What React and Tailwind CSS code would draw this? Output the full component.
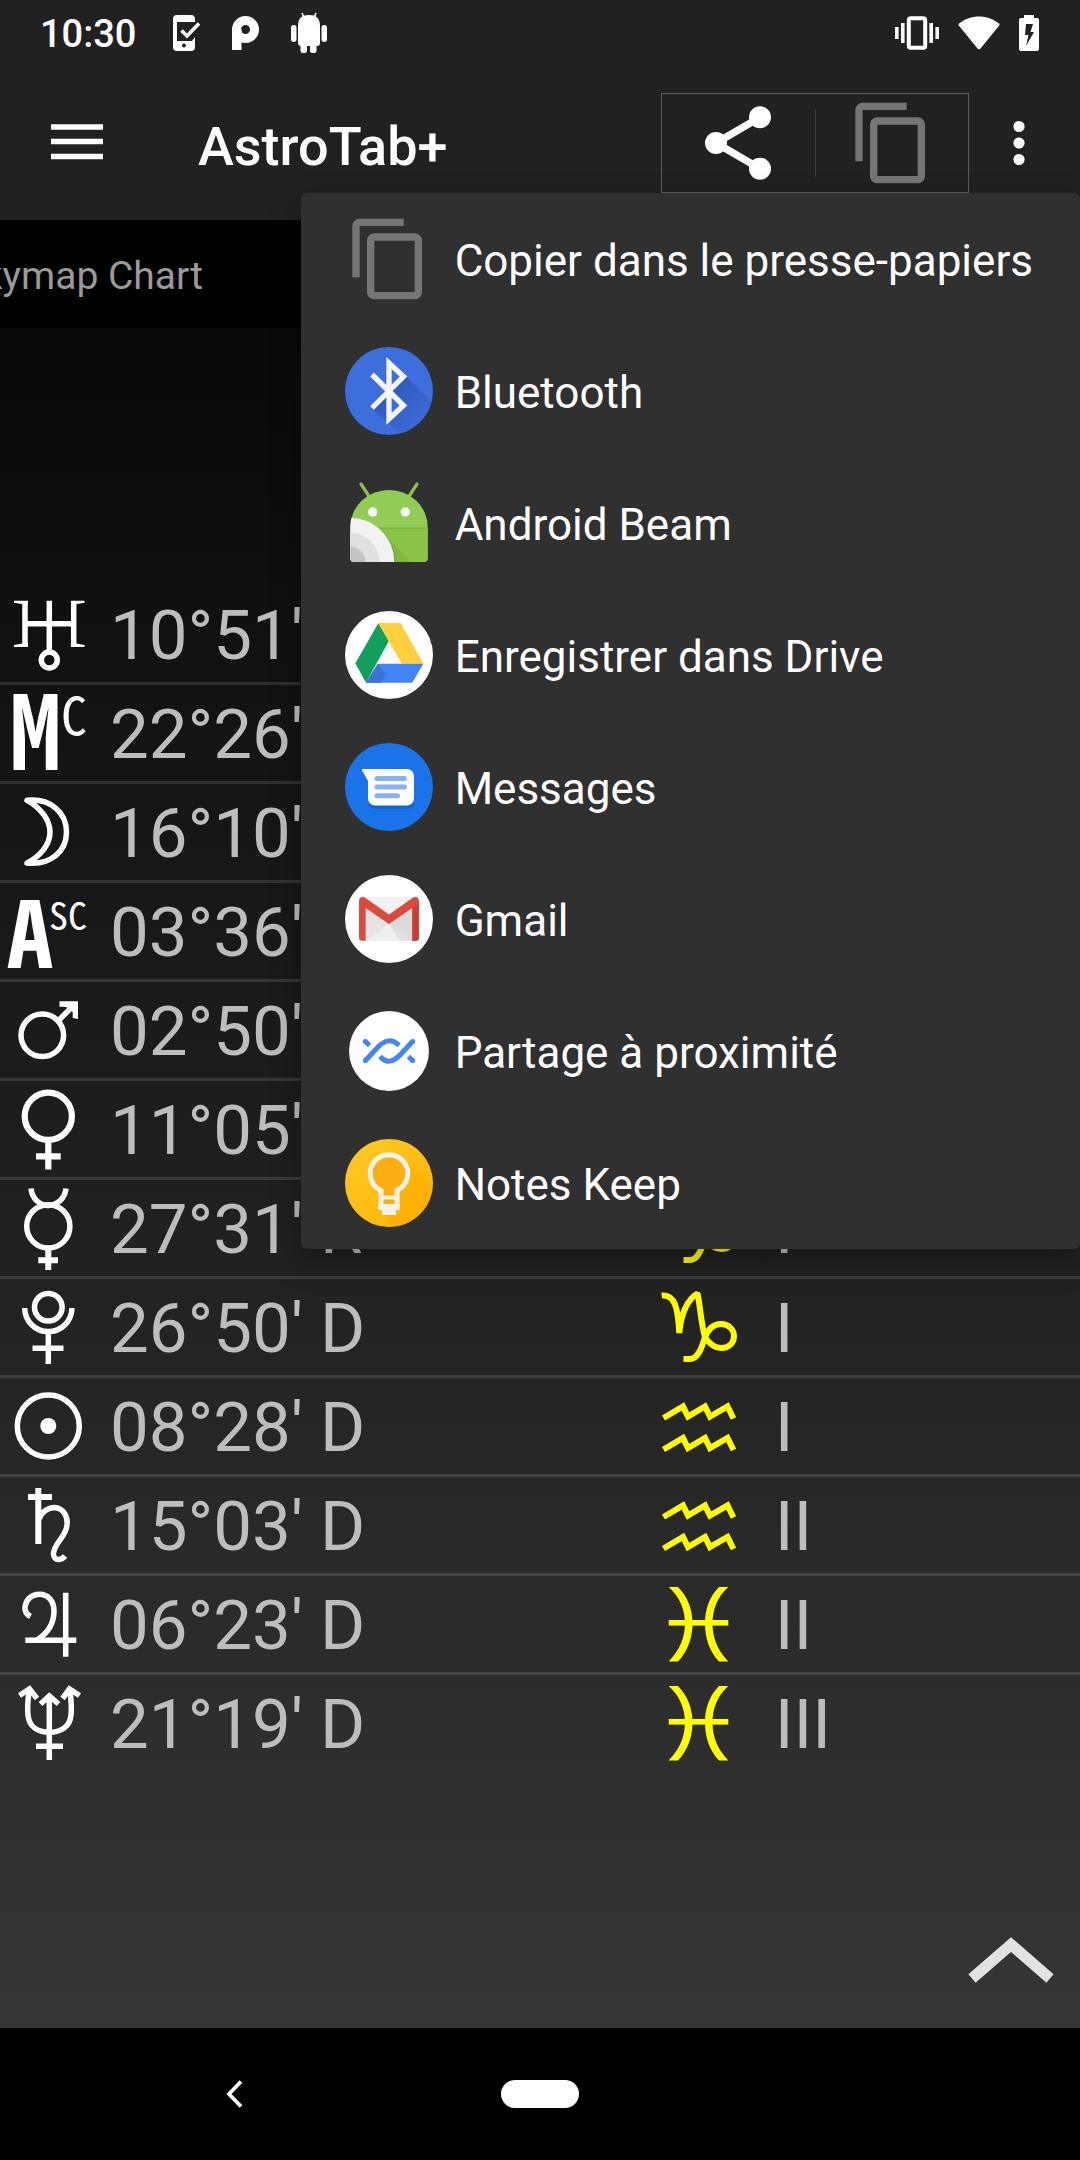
import React from "react";

/* ---------- status bar icons ---------- */

const PhoneCheckIcon = () => (
  <svg width="28" height="36" viewBox="0 0 28 36" aria-hidden="true">
    <path
      fill="#fff"
      fillRule="evenodd"
      d="M4 0H18a4 4 0 0 1 4 4V7H4V26H19L22 22V32a4 4 0 0 1-4 4H4a4 4 0 0 1-4-4V4A4 4 0 0 1 4 0ZM11 28.500a2 2 0 1 0 .01 0Z"
    />
    <path d="M8.500 15.500 14 21 26 8.500" fill="none" stroke="#fff" strokeWidth="3.500" />
  </svg>
);

const PeeIcon = () => (
  <svg width="28" height="36" viewBox="0 0 28 36" aria-hidden="true">
    <circle cx="13.500" cy="14.500" r="9" fill="none" stroke="#fff" strokeWidth="9" />
    <rect x="0" y="14" width="9.500" height="21" fill="#fff" />
  </svg>
);

const AndroidIcon = () => (
  <svg width="36" height="42" viewBox="0 0 36 42" aria-hidden="true" fill="#fff">
    <path d="M11 1 13 6M25 1 23 6" stroke="#fff" strokeWidth="1.600" />
    <path d="M7 14C7 6 11 3 18 3s11 3 11 11Z" />
    <rect x="7" y="12" width="22" height="22" rx="3" />
    <rect x="0" y="13" width="5.500" height="17" rx="2.700" />
    <rect x="30.500" y="13" width="5.500" height="17" rx="2.700" />
    <rect x="9.500" y="28" width="6.500" height="13" rx="2.500" />
    <rect x="19" y="28" width="6.500" height="13" rx="2.500" />
  </svg>
);

const VibrateIcon = () => (
  <svg width="44" height="34" viewBox="0 0 44 34" aria-hidden="true" fill="#fff">
    <rect x="0" y="11" width="3.600" height="12" />
    <rect x="6" y="7" width="3.600" height="20" />
    <rect x="34.400" y="7" width="3.600" height="20" />
    <rect x="40.400" y="11" width="3.600" height="12" />
    <rect x="13.800" y="2.300" width="16.400" height="29.400" rx="2" fill="none" stroke="#fff" strokeWidth="4" />
  </svg>
);

const WifiIcon = () => (
  <svg width="42" height="34" viewBox="0 0 42 34" aria-hidden="true">
    <path fill="#fff" d="M1 7.500C7 3 14 .5 21 .5S35 3 41 7.500q1 1 .2 2L22.500 32.500q-1.500 1.500-3 0L.8 9.500q-.8-1 .2-2Z" />
  </svg>
);

const BatteryIcon = () => (
  <svg width="20" height="36" viewBox="0 0 20 36" aria-hidden="true">
    <path
      fill="#fff"
      fillRule="evenodd"
      d="M5 0H15V3H18a2 2 0 0 1 2 2V34a2 2 0 0 1-2 2H2a2 2 0 0 1-2-2V5A2 2 0 0 1 2 3H5ZM7 9 6 20H9.500L7 31 15 17H11.500L14 9Z"
    />
  </svg>
);

/* ---------- action icons ---------- */

const CopyIcon = () => (
  <svg width="88" height="88" viewBox="0 0 24 24" aria-hidden="true" fill="#757575">
    <path d="M16 1H4c-1.100 0-2 .9-2 2v14h2V3h12V1zm3 4H8c-1.100 0-2 .9-2 2v14c0 1.100.9 2 2 2h11c1.100 0 2-.9 2-2V7c0-1.100-.9-2-2-2zm0 16H8V7h11v14z" />
  </svg>
);

const ShareIcon = () => (
  <svg width="88" height="88" viewBox="0 0 24 24" aria-hidden="true" fill="#fff">
    <path d="M6 12 18 5M6 12 18 19" stroke="#fff" strokeWidth="2" />
    <circle cx="18" cy="5" r="3" />
    <circle cx="6" cy="12" r="3" />
    <circle cx="18" cy="19" r="3" />
  </svg>
);

/* ---------- share target icons ---------- */

const BluetoothIcon = () => (
  <svg width="88" height="88" viewBox="0 0 88 88" aria-hidden="true">
    <defs>
      <clipPath id="bt-clip">
        <circle cx="44" cy="44" r="44" />
      </clipPath>
      <linearGradient id="bt-shadow" x1="0.200" y1="0.200" x2="0.900" y2="0.900">
        <stop offset="0" stopColor="#2a4fae" stopOpacity="0.700" />
        <stop offset="1" stopColor="#2a4fae" stopOpacity="0" />
      </linearGradient>
    </defs>
    <g clipPath="url(#bt-clip)">
      <rect width="88" height="88" fill="#3e6edb" />
      <path d="M61 29 90 58V90H60L27 62 44 44 44 72 61 58 47 44Z" fill="url(#bt-shadow)" />
    </g>
    <path d="M27 27.500 58.500 58.500 44 72V16L58.500 29.500 27 61" fill="none" stroke="#f5f5f5" strokeWidth="5.300" />
  </svg>
);

const BeamIcon = () => (
  <svg width="88" height="88" viewBox="0 0 88 88" aria-hidden="true">
    <defs>
      <clipPath id="beam-clip">
        <path d="M5.300 48A38.700 37 0 0 1 82.700 48V79a4 4 0 0 1-4 4H9.300a4 4 0 0 1-4-4Z" />
      </clipPath>
    </defs>
    <path d="M16 5 24.500 18M72 5 63.500 18" stroke="#8bc34a" strokeWidth="3.200" strokeLinecap="round" />
    <g clipPath="url(#beam-clip)">
      <rect width="88" height="88" fill="#92cb55" />
      <rect y="49" width="88" height="39" fill="#8bc34a" />
      <rect y="48.500" width="88" height="1.200" fill="#7cb342" />
      <path d="M36 52 66 83H48Z" fill="#7cb342" opacity="0.700" />
      <circle cx="6" cy="84" r="45" fill="#689f38" opacity="0.450" />
      <circle cx="5" cy="83" r="44.300" fill="#f2f2f2" />
      <circle cx="5" cy="83" r="29.500" fill="#e0e0e0" />
      <circle cx="5" cy="83" r="15.500" fill="#c4c4c4" />
    </g>
    <circle cx="27.700" cy="33" r="4.700" fill="#f5f5f5" />
    <circle cx="60.300" cy="33" r="4.700" fill="#f5f5f5" />
  </svg>
);

const DriveIcon = () => (
  <svg width="88" height="88" viewBox="0 0 88 88" aria-hidden="true">
    <circle cx="44" cy="44" r="44" fill="#fff" />
    <path d="M33.300 12H55.700L78.300 52.700H57L43.700 30.300Z" fill="#ffcf3e" />
    <path d="M32.700 52.700H78.300L67.300 71.700H21Z" fill="#4284f5" />
    <path d="M32.700 52.700 41 64 36 71.700H21Z" fill="#3a72d8" />
    <path d="M33.300 12.300 43.700 30.300 21 71.700 10.300 52.300Z" fill="#11a05c" />
  </svg>
);

const MessagesIcon = () => (
  <svg width="88" height="88" viewBox="0 0 88 88" aria-hidden="true">
    <circle cx="44" cy="44" r="44" fill="#1a73e8" />
    <path d="M18 30 24 40V61q1 5 6 5H63q6-1 6-6L67 40Z" fill="#155fc4" opacity="0.700" />
    <path d="M18 26H62a7 7 0 0 1 7 7V55.500a7 7 0 0 1-7 7H30a7 7 0 0 1-7-7V38L17 27.500Q16.800 26 18 26Z" fill="#fff" />
    <path d="M32 35.500H59.500M32 44H59.500M32 52.700H52.500" stroke="#8ab0f6" strokeWidth="5" strokeLinecap="round" />
  </svg>
);

const GmailIcon = () => (
  <svg width="88" height="88" viewBox="0 0 88 88" aria-hidden="true">
    <circle cx="44" cy="44" r="44" fill="#fff" />
    <rect x="15" y="22" width="58" height="43.700" rx="2" fill="#f1f1f1" />
    <path d="M21 34 44 48 67 34V65.700H21Z" fill="#e4e4e4" />
    <path d="M21 65.700 44 49 67 65.700Z" fill="#efefef" />
    <path d="M21 34 44 50 55 65.700H67V34L44 48Z" fill="#d3d3d3" opacity="0.450" />
    <path
      d="M14 26C14 22 18 21 20.500 23L44 39.500 67.500 23C70 21 74 22 74 26V62.500q0 3.200-3.200 3.200H67.300V33L44 49 20.700 33V65.700H17.200Q14 65.700 14 62.500Z"
      fill="#db4a3f"
    />
    <path d="M67.300 33 74 28.500V62.500q0 3.200-3.200 3.200H67.300Z" fill="#cc3d35" />
  </svg>
);

const NearbyIcon = () => (
  <svg width="88" height="88" viewBox="0 0 88 88" aria-hidden="true">
    <circle cx="44" cy="44" r="40" fill="#fff" />
    <g fill="none" stroke="#4285f4" strokeWidth="5">
      <path d="M20.500 53.500 33 40Q44 28.500 54 38.500" />
      <path d="M67.500 34.500 55 48Q44 59.500 35 49.500" />
      <path d="M20 34 24.500 38.500M63.500 49.500 68 54" />
    </g>
    <g fill="#4285f4">
      <circle cx="20.300" cy="53.500" r="2.500" />
      <circle cx="67.700" cy="34.500" r="2.500" />
      <circle cx="20.300" cy="34.500" r="2.500" />
      <circle cx="67.700" cy="53.500" r="2.500" />
    </g>
  </svg>
);

const KeepIcon = () => (
  <svg width="88" height="88" viewBox="0 0 88 88" aria-hidden="true">
    <defs>
      <linearGradient id="keep-bg" x1="0" y1="0" x2="1" y2="1">
        <stop offset="0" stopColor="#ffc928" />
        <stop offset="1" stopColor="#ffb300" />
      </linearGradient>
      <clipPath id="keep-clip">
        <circle cx="44" cy="44" r="44" />
      </clipPath>
    </defs>
    <g clipPath="url(#keep-clip)">
      <rect width="88" height="88" fill="url(#keep-bg)" />
      <path d="M60 20 90 50V90H50L40 76H55V52Z" fill="#ffad00" opacity="0.600" />
    </g>
    <path d="M36 68V51.500A18.800 18.800 0 1 1 52 51.500V68Z" fill="#fcae12" stroke="#f7f3ec" strokeWidth="5" />
    <path d="M35 58.500H53" stroke="#f7f3ec" strokeWidth="4" />
    <path d="M33.500 65H54.500V71H51V76H37V71H33.500Z" fill="#f7f3ec" />
  </svg>
);

/* ---------- astrological glyphs ---------- */

const Glyph = ({ label, color = "#fff", width = 5.5, children }) => (
  <svg width="96" height="96" viewBox="0 0 96 96" role="img" aria-label={label} fill="none" stroke={color} strokeWidth={width} className="block overflow-visible">
    {children}
  </svg>
);

const angleText = "font-['Noto_Sans_Mono_CJK_JP','Noto_Sans_CJK_JP',sans-serif] [font-feature-settings:'hwid']";

const planets = {
  Uranus: (
    <>
      <path d="M25 15V60.500M73.700 15V60.500M25 37.700H73.700M49.300 14.700V64" />
      <path d="M14 14.700H28V19L14 16.700ZM14 61H28V56.500L14 59ZM84.500 14.700H71V19L84.500 16.700ZM84.500 61H71V56.500L84.500 59Z" fill="#fff" stroke="none" />
      <circle cx="49.300" cy="74" r="8" />
    </>
  ),
  Milieu: (
    <g fill="#fff" stroke="none" className={angleText}>
      <text x="10" y="85" fontSize="102" fontWeight="700">M</text>
      <text x="61" y="50" fontSize="52">C</text>
    </g>
  ),
  Lune: (
    <path d="M27 16.300C50 14 66.500 28 66.500 48S50 81.500 27 79C41 72 50 60 50 48S41 24 27 16.300Z" strokeLinejoin="round" />
  ),
  Ascendant: (
    <g fill="#fff" stroke="none" className={angleText}>
      <text x="7" y="85" fontSize="92" fontWeight="700">A</text>
      <text x="49" y="47" fontSize="38">SC</text>
    </g>
  ),
  Mars: (
    <>
      <circle cx="42.300" cy="53.300" r="21.300" />
      <path d="M58 39 74 23" />
      <path d="M59.500 19.300H78V37L72.700 36V30L66 25 59.500 24.700Z" fill="#fff" stroke="none" />
    </>
  ),
  Venus: (
    <g strokeWidth="6.200">
      <circle cx="48.300" cy="35.300" r="23.600" />
      <path d="M48.300 59V88.500M36 75.300H60.700" />
    </g>
  ),
  Mercure: (
    <>
      <circle cx="48.300" cy="46.300" r="21.600" />
      <path d="M31 8.500C32 18 39 25.500 48.300 25.500S65 18 66 8.500" />
      <path d="M48.300 68V90M38.300 80.300H58" strokeWidth="6" />
    </>
  ),
  Pluton: (
    <>
      <circle cx="48.300" cy="28.300" r="13.800" />
      <path d="M24.700 29A23.600 23.600 0 0 0 71.900 29" />
      <path d="M48.300 52V85M32.500 69.300H63.500" />
    </>
  ),
  Soleil: (
    <>
      <circle cx="48.300" cy="48" r="31" />
      <circle cx="48.300" cy="48" r="8" fill="#fff" stroke="none" />
    </>
  ),
  Saturne: (
    <>
      <path d="M38.300 11V67M28 20H52" strokeWidth="6" />
      <path d="M38.500 43C41 35 48 30.500 54.500 30.500C63 31 68 39 67 48C66 60 55 65 53.500 76C53 80.500 56 82.800 59 82.500C62 82.200 63.500 81 65 79" />
    </>
  ),
  Jupiter: (
    <>
      <path d="M65.700 16.700V80.700M25.300 64.300H76.300" />
      <path d="M30.500 40.500C26 38 24.500 35 25 31C26 23 32 18.300 39.500 18.300C48 18.300 54 25 54 35C54 47 48 57 37 64" />
    </>
  ),
  Neptune: (
    <>
      <path d="M49.300 20V85M36 71.300H63" />
      <path d="M29 16C28 24 27 32 28 40C29 52 38 57.300 49.300 57.300S70 52 71 40C72 32 71 24 70 16" />
      <path d="M19.500 20.500 29.500 14 37 23.500M40.500 29 49.300 21 58.500 29M62.500 23.500 69.500 14 79.500 20.500" />
    </>
  ),
};

const signs = {
  Capricorne: (
    <path
      d="M10.700 16.500C24 15 27 29 28.300 54C30 34 37 20 46.500 14.500C49 25 50 45 54 58C50 72 46 80 39 80H32.500M54 58.500C58 48 64 45 70 45C78 45 83 51 83 57C83 64 78 69 70 69C63 69 58 64 54 58.500"
      strokeLinejoin="bevel"
    />
  ),
  Verseau: (
    <path d="M12.500 40 32 28.500 37 38.500 54 28.500 59 38.500 76.500 28.500 82.500 40.500M12.500 71.500 32 60 37 70 54 60 59 70 76.500 60 82.500 72" />
  ),
  Poissons: (
    <g fill="#ffff00" stroke="none">
      <path d="M17.700 11H27C37 21 41.500 34 41.500 47.500S37 75 27 85.500H17.700C29 74 34 61 34 47.500S29 21 17.700 11Z" />
      <path d="M77.300 11H68C58 21 54 34 54 47.500S58 75 68 85.500H77.300C66 74 61.500 61 61.500 47.500S66 21 77.300 11Z" />
      <rect x="17.700" y="44" width="59.600" height="5.600" />
    </g>
  ),
};

const rows = [
  { planet: "Uranus", degree: "10°51'" },
  { planet: "Milieu", degree: "22°26'" },
  { planet: "Lune", degree: "16°10'" },
  { planet: "Ascendant", degree: "03°36'" },
  { planet: "Mars", degree: "02°50'" },
  { planet: "Venus", degree: "11°05'" },
  { planet: "Mercure", degree: "27°31' R", sign: "Capricorne", decan: "I" },
  { planet: "Pluton", degree: "26°50' D", sign: "Capricorne", decan: "I" },
  { planet: "Soleil", degree: "08°28' D", sign: "Verseau", decan: "I" },
  { planet: "Saturne", degree: "15°03' D", sign: "Verseau", decan: "II" },
  { planet: "Jupiter", degree: "06°23' D", sign: "Poissons", decan: "II" },
  { planet: "Neptune", degree: "21°19' D", sign: "Poissons", decan: "III" },
];

const targets = [
  { label: "Copier dans le presse-papiers", Icon: CopyIcon },
  { label: "Bluetooth", Icon: BluetoothIcon },
  { label: "Android Beam", Icon: BeamIcon },
  { label: "Enregistrer dans Drive", Icon: DriveIcon },
  { label: "Messages", Icon: MessagesIcon },
  { label: "Gmail", Icon: GmailIcon },
  { label: "Partage à proximité", Icon: NearbyIcon },
  { label: "Notes Keep", Icon: KeepIcon },
];

/* ---------- page sections ---------- */

function StatusBar() {
  return (
    <div className="flex h-[66px] items-center bg-[#212121] pl-10 pr-[41px] text-white">
      <span className="pt-0.5 text-[38px] leading-[64px] font-medium">10:30</span>
      <div className="ml-[37px] flex items-center gap-[31px]">
        <PhoneCheckIcon />
        <PeeIcon />
        <AndroidIcon />
      </div>
      <div className="ml-auto flex items-center gap-[19px]">
        <VibrateIcon />
        <WifiIcon />
        <BatteryIcon />
      </div>
    </div>
  );
}

function ShareMenu() {
  return (
    <ul
      role="menu"
      className="absolute right-0 top-[127px] z-10 rounded-md bg-[#303030] shadow-[0_12px_32px_rgba(0,0,0,0.3)]"
    >
      {targets.map(({ label, Icon }) => (
        <li key={label} role="none">
          <button type="button" role="menuitem" className="flex h-[132px] w-full items-center gap-[22px] pr-[47px] pl-11 text-left text-[44px] whitespace-nowrap text-white">
            <span className="shrink-0">
              <Icon />
            </span>
            <span className="pt-1">{label}</span>
          </button>
        </li>
      ))}
    </ul>
  );
}

function AppBar() {
  return (
    <header className="relative flex h-[154px] items-center bg-[#212121] text-white">
      <button type="button" aria-label="Menu" className="ml-[51px]">
        <svg width="52" height="40" viewBox="0 0 52 40" aria-hidden="true" className="block">
          <path d="M0 4H52M0 18.500H52M0 33.500H52" stroke="#fff" strokeWidth="5.600" />
        </svg>
      </button>
      <h1 className="ml-[95px] pt-1.5 text-[54px] font-medium">AstroTab+</h1>
      <div className="ml-auto flex h-[100px] w-[308px] items-center border border-[#5c5c5c]">
        <button type="button" aria-label="Partager" className="flex flex-1 justify-center">
          <ShareIcon />
        </button>
        <span className="h-[68px] w-px bg-[#3c3c3c]" />
        <button type="button" aria-label="Copier" className="flex flex-1 justify-center">
          <CopyIcon />
        </button>
      </div>
      <button type="button" aria-label="Plus d'options" className="mr-[11px] flex w-25 justify-center">
        <svg width="12" height="46" viewBox="0 0 12 46" aria-hidden="true" fill="#fff">
          <circle cx="6" cy="6.500" r="5.600" />
          <circle cx="6" cy="23" r="5.600" />
          <circle cx="6" cy="39.500" r="5.600" />
        </svg>
      </button>
      <ShareMenu />
    </header>
  );
}

function PositionsTable() {
  return (
    <table className="mt-[258px] w-full table-fixed border-collapse text-[69px] leading-[96px] text-[#bdbdbd]">
      <colgroup>
        <col className="w-[10%]" />
        <col className="w-[50%]" />
        <col className="w-[11%]" />
        <col />
      </colgroup>
      <tbody>
        {rows.map((row, i) => (
          <tr key={row.planet} className={i > 0 ? "shadow-[0_-3px_0_rgba(255,255,255,0.12)]" : ""}>
            <td className="pb-[3px] align-top">
              <Glyph label={row.planet}>{planets[row.planet]}</Glyph>
            </td>
            <td className="pt-0.5 pl-0.5 align-top whitespace-nowrap">{row.degree}</td>
            <td className="pl-[3px] align-top">
              {row.sign && (
                <Glyph label={row.sign} color="#ffff00" width={6}>
                  {signs[row.sign]}
                </Glyph>
              )}
            </td>
            <td className="pt-0.5 pl-2 align-top">{row.decan}</td>
          </tr>
        ))}
      </tbody>
    </table>
  );
}

function NavigationBar() {
  return (
    <nav className="grid h-[132px] grid-cols-[1fr_78px_1fr] items-center bg-black">
      <button type="button" aria-label="Retour" className="ml-[226px] w-[17px]">
        <svg width="17" height="28" viewBox="0 0 17 28" aria-hidden="true" className="block">
          <path d="M15 1.500 3 14 15 26.500" fill="none" stroke="#fff" strokeWidth="3.800" />
        </svg>
      </button>
      <button type="button" aria-label="Accueil" className="h-7 rounded-full bg-white" />
    </nav>
  );
}

export default function App() {
  return (
    <div className="flex min-h-screen flex-col overflow-x-hidden bg-[linear-gradient(#000000,#393939)] font-['Roboto',sans-serif]">
      <StatusBar />
      <AppBar />
      <main className="flex flex-1 flex-col">
        <div className="h-[108px] bg-black">
          <div className="flex h-[108px] w-[203px] items-center justify-end overflow-hidden pt-1 text-[39px] whitespace-nowrap text-[#9a9a9a]">
            Skymap Chart
          </div>
        </div>
        <PositionsTable />
        <button type="button" aria-label="Remonter" className="mt-auto mr-[26px] mb-11 self-end">
          <svg width="86" height="48" viewBox="0 0 86 48" aria-hidden="true" className="block">
            <path d="M4 42.500 43 8.500 82 42.500" fill="none" stroke="#e2e2e2" strokeWidth="11" />
          </svg>
        </button>
      </main>
      <NavigationBar />
    </div>
  );
}
